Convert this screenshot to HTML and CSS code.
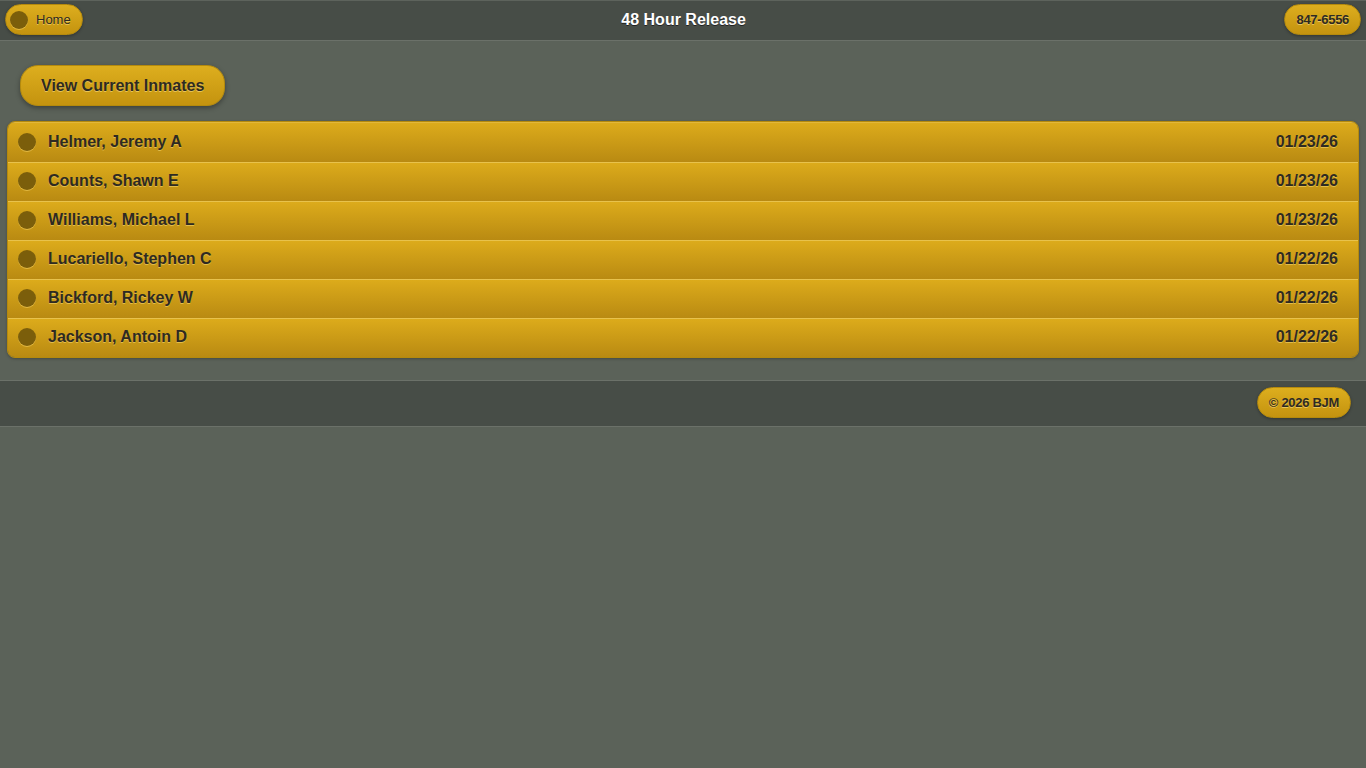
FILE: index.html
```html
<!DOCTYPE html>
<html lang="en">
<head>
    <meta charset="UTF-8">
    <meta name="viewport" content="width=device-width, initial-scale=1.0">
    <title>48 Hour Release</title>
    <link rel="stylesheet" href="styles.css">
</head>
<body>
    <div class="page">
        <div class="header">
            <a class="btn btn-icon" href="#"><span class="dot"></span>Home</a>
            <h1>48 Hour Release</h1>
            <a class="btn" href="#">847-6556</a>
        </div>

        <div class="content">
            <a class="btn btn-big" href="#">View Current Inmates</a>
            <ul class="list">
                <li><span class="dot"></span><span class="name">Helmer, Jeremy A</span><span class="date">01/23/26</span></li>
                <li><span class="dot"></span><span class="name">Counts, Shawn E</span><span class="date">01/23/26</span></li>
                <li><span class="dot"></span><span class="name">Williams, Michael L</span><span class="date">01/23/26</span></li>
                <li><span class="dot"></span><span class="name">Lucariello, Stephen C</span><span class="date">01/22/26</span></li>
                <li><span class="dot"></span><span class="name">Bickford, Rickey W</span><span class="date">01/22/26</span></li>
                <li><span class="dot"></span><span class="name">Jackson, Antoin D</span><span class="date">01/22/26</span></li>
            </ul>
        </div>

        <div class="footer">
            <a class="btn btn-small" href="#">&copy; 2026 BJM</a>
        </div>
    </div>
</body>
</html>
```

FILE: styles.css
```css
body {
    margin: 0;
    font-family: 'Liberation Sans', Arial, sans-serif;
    background-color: #5b6259;
    color: #333;
}
a {
    text-decoration: none;
}
.header {
    display: flex;
    align-items: center;
    justify-content: space-between;
    height: 37px;
    padding: 0 5px 2px;
    background-color: #474d47;
    border-top: 1px solid #5d635c;
    border-bottom: 1px solid #6b7169;
}
.header h1 {
    margin: 0;
    font-size: 16px;
    font-weight: bold;
    color: #fff;
    text-shadow: 0 1px 0 #222;
}
.btn {
    display: inline-flex;
    align-items: center;
    height: 29px;
    padding: 0 11px;
    border: 1px solid #b58a0c;
    border-radius: 16px;
    background: linear-gradient(#ddae1e, #c4930f);
    color: #2e2a22;
    font-size: 13px;
    font-weight: bold;
    letter-spacing: -0.3px;
    text-shadow: 0 1px 0 #e8c55a;
    box-shadow: 0 1px 3px rgba(0, 0, 0, 0.3);
}
.btn-icon {
    padding-left: 4px;
    padding-right: 11px;
    font-weight: normal;
    letter-spacing: 0;
}
.btn-icon .dot {
    margin-right: 8px;
}
.dot {
    display: inline-block;
    width: 18px;
    height: 18px;
    border-radius: 50%;
    background-color: #7b5e0b;
    box-shadow: 0 1px 0 rgba(255, 220, 110, 0.5);
}
.content {
    padding: 24px 7px 22px;
}
.btn-big {
    height: 39px;
    margin-left: 13px;
    padding: 0 20px;
    font-size: 16px;
    letter-spacing: 0;
    border-radius: 18px;
    box-shadow: 0 2px 5px rgba(0, 0, 0, 0.35);
}
.list {
    list-style: none;
    margin: 15px 0 0;
    padding: 0;
    border: 1px solid #b58a0c;
    border-radius: 8px;
    overflow: hidden;
    box-shadow: 0 1px 3px rgba(0, 0, 0, 0.25);
}
.list li {
    display: flex;
    align-items: center;
    height: 36px;
    padding: 0 20px 2px 10px;
    background: linear-gradient(#dcab1b, #b98a12);
    border-top: 1px solid #e8c24c;
    font-size: 16px;
    font-weight: bold;
    color: #2e2a22;
    text-shadow: 0 1px 0 #e3bd4a;
}
.list li:first-child {
    height: 37px;
    border-top-color: #e3b73a;
}
.list .name {
    flex: 1;
    margin-left: 12px;
}
.footer {
    display: flex;
    justify-content: flex-end;
    align-items: center;
    height: 43px;
    padding: 0 15px 2px;
    background-color: #474d47;
    border-top: 1px solid #6b7169;
    border-bottom: 1px solid #6b7169;
}
.btn-small {
    padding: 0 11px;
}
```
